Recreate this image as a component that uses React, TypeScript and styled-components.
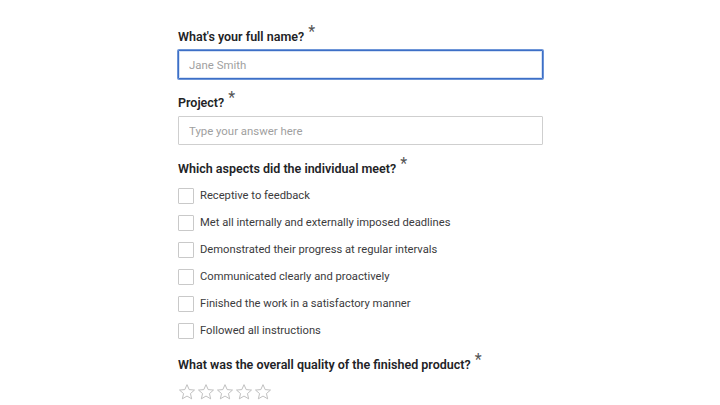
import React from "react";
import styled, { createGlobalStyle } from "styled-components";

const Global = createGlobalStyle`
  html, body { margin: 0; padding: 0; background: #ffffff; }
  body { font-family: "Roboto", "Noto Sans", sans-serif; -webkit-font-smoothing: antialiased; }
  * { box-sizing: border-box; }
`;

const Page = styled.div`
  width: 720px;
  height: 405px;
  overflow: hidden;
  display: flex;
  justify-content: flex-start;
  padding: 26px 0 0 178px;
`;

const Form = styled.form`
  width: 365px;
  display: flex;
  flex-direction: column;
`;

const Field = styled.div<{ $gap?: number }>`
  display: flex;
  flex-direction: column;
  margin-bottom: ${(p) => p.$gap ?? 13}px;
`;

const Label = styled.label`
  font-size: 12.5px;
  line-height: 20px;
  font-weight: 600;
  color: #222326;
  margin-bottom: 3px;
  white-space: nowrap;
`;

const Required = styled.span`
  font-weight: 400;
  color: #555;
  font-size: 16px;
  position: relative;
  top: -4px;
  margin-left: 4px;
`;

const Input = styled.input<{ $focused?: boolean }>`
  width: 100%;
  height: 29px;
  border: 1px solid ${(p) => (p.$focused ? "#3d6fc6" : "#cfcfcf")};
  box-shadow: ${(p) => (p.$focused ? "0 0 0 1px #6d95d8, inset 0 0 0 1px #d6e2f5" : "none")};
  border-radius: 1px;
  padding: 0 10px;
  font-family: inherit;
  font-size: 11.4px;
  color: #333;
  outline: none;
  &::placeholder { color: #9f9f9f; }
`;

const CheckList = styled.div`
  display: flex;
  flex-direction: column;
`;

const CheckRow = styled.label`
  display: flex;
  align-items: center;
  height: 27px;
  gap: 6px;
  font-size: 11.2px;
  color: #3b3b3d;
`;

const Box = styled.span`
  width: 16px;
  height: 16px;
  border: 1px solid #c9c9c9;
  border-radius: 1px;
  background: #fff;
  flex: none;
`;

const Stars = styled.div`
  display: flex;
  gap: 1px;
  margin-top: 5px;
`;

const Star = () => (
  <svg width="18" height="18" viewBox="0 0 24 24" fill="none" stroke="#b9b9b9" strokeWidth="1.2" strokeLinejoin="miter">
    <path d="M12 2.2l2.9 6.6 7.1.6-5.4 4.7 1.6 7-6.2-3.7-6.2 3.7 1.6-7-5.4-4.7 7.1-.6z" />
  </svg>
);

const aspects = [
  "Receptive to feedback",
  "Met all internally and externally imposed deadlines",
  "Demonstrated their progress at regular intervals",
  "Communicated clearly and proactively",
  "Finished the work in a satisfactory manner",
  "Followed all instructions",
];

export default function App() {
  return (
    <>
      <Global />
      <Page>
        <Form>
          <Field>
            <Label>
              What's your full name?<Required>*</Required>
            </Label>
            <Input $focused placeholder="Jane Smith" />
          </Field>
          <Field>
            <Label>
              Project?<Required>*</Required>
            </Label>
            <Input placeholder="Type your answer here" />
          </Field>
          <Field $gap={10}>
            <Label>
              Which aspects did the individual meet?<Required>*</Required>
            </Label>
            <CheckList>
              {aspects.map((a) => (
                <CheckRow key={a}>
                  <Box />
                  {a}
                </CheckRow>
              ))}
            </CheckList>
          </Field>
          <Field>
            <Label>
              What was the overall quality of the finished product?<Required>*</Required>
            </Label>
            <Stars>
              {[0, 1, 2, 3, 4].map((i) => (
                <Star key={i} />
              ))}
            </Stars>
          </Field>
        </Form>
      </Page>
    </>
  );
}
